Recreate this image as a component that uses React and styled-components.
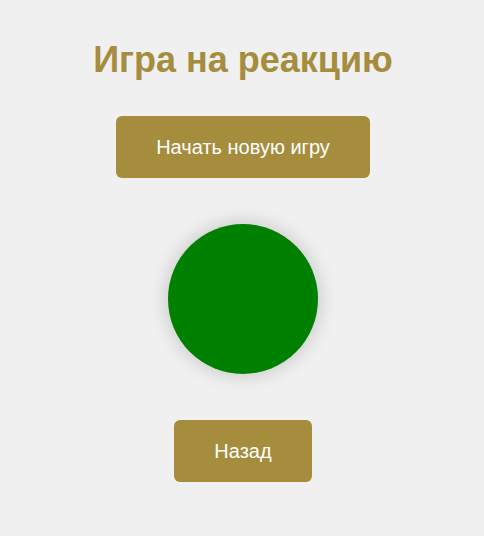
import React, { useState } from 'react';
import styled, { createGlobalStyle } from 'styled-components';

const GlobalStyle = createGlobalStyle`
  body {
    margin: 0;
    background-color: #f0f0f0;
    font-family: "Liberation Sans", Arial, sans-serif;
  }
`;

const ReactionGame = () => {
  const [color, setColor] = useState('green');

  const startGame = () => {
    setColor('red');
    setTimeout(() => setColor('green'), 1500);
  };

  return (
    <GameContainer>
      <Title>Игра на реакцию</Title>
      <Button onClick={startGame}>Начать новую игру</Button>
      <Circle $color={color} />
      <Button onClick={() => window.history.back()}>Назад</Button>
    </GameContainer>
  );
};

export default function App() {
  return (
    <>
      <GlobalStyle />
      <ReactionGame />
    </>
  );
}

const GameContainer = styled.div`
  display: flex;
  flex-direction: column;
  align-items: center;
  padding: 20px 18px 20px 20px;
`;

const Title = styled.h1`
  color: #a68d3e;
  font-size: 36px;
  line-height: 40px;
  font-weight: bold;
  margin: 20px 0 36px;
`;

const Button = styled.button`
  padding: 20px 40px;
  font-family: "Liberation Sans", Arial, sans-serif;
  font-size: 20px;
  line-height: 22px;
  background-color: #a68d3e;
  color: white;
  border: none;
  border-radius: 6px;
  cursor: pointer;
`;

const Circle = styled.div`
  width: 150px;
  height: 150px;
  margin: 46px 0;
  border-radius: 50%;
  background-color: ${(p) => p.$color};
  box-shadow: 0 0 20px rgba(0, 0, 0, 0.2);
`;
